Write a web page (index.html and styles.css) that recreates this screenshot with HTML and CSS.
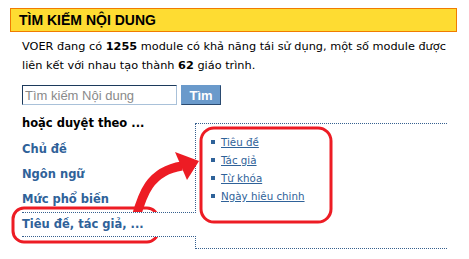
FILE: index.html
```html
<!DOCTYPE html>
<html lang="vi">
<head>
    <meta charset="UTF-8">
    <title>Tìm kiếm nội dung</title>
    <link rel="stylesheet" href="styles.css">
</head>
<body>
    <div class="page">
        <div class="box-title">TÌM KIẾM NỘI DUNG</div>

        <p class="intro">
            VOER đang có <b>1255</b> module có khả năng tái sử dụng, một số module được<br>
            liên kết với nhau tạo thành <b>62</b> giáo trình.
        </p>

        <form class="search-form" onsubmit="return false">
            <input type="text" class="search-input" placeholder="Tìm kiếm Nội dung">
            <button type="submit" class="search-button">Tìm</button>
        </form>

        <div class="browse">
            <div class="browse-menu">
                <div class="browse-heading">hoặc duyệt theo ...</div>
                <a class="browse-tab" href="#">Chủ đề</a>
                <a class="browse-tab" href="#">Ngôn ngữ</a>
                <a class="browse-tab" href="#">Mức phổ biến</a>
                <a class="browse-tab active" href="#">Tiêu đề, tác giả, ...</a>
            </div>
            <div class="browse-panel">
                <ul class="browse-list">
                    <li><a href="#">Tiêu đề</a></li>
                    <li><a href="#">Tác giả</a></li>
                    <li><a href="#">Từ khóa</a></li>
                    <li><a href="#">Ngày hiêu chinh</a></li>
                </ul>
            </div>
        </div>

        <!-- red hand-drawn annotation -->
        <svg class="markup" width="469" height="259" viewBox="0 0 469 259">
            <rect x="201" y="128" width="130" height="94" rx="13" fill="none" stroke="#ed1c24" stroke-width="3"/>
            <rect x="13" y="208" width="145" height="34" rx="11" fill="none" stroke="#ed1c24" stroke-width="3"/>
            <path d="M136 217 C 142 196, 149 171, 182 166" fill="none" stroke="#ed1c24" stroke-width="9"/>
            <polygon points="175,152 199,161 187,180" fill="#ed1c24"/>
        </svg>
    </div>
</body>
</html>
```

FILE: styles.css
```css
:root {
    --link: #2f6299;
    --dots: #36608f;
    --red: #ed1c24;
}

* {
    margin: 0;
    padding: 0;
    box-sizing: border-box;
}

body {
    font-family: 'DejaVu Sans', Verdana, sans-serif;
    font-size: 11px;
    color: #000;
    background: #fff;
}

.page {
    position: relative;
    width: 469px;
    height: 259px;
    padding: 8px 0 0 10px;
}

.box-title {
    width: 447px;
    height: 24px;
    padding-left: 8px;
    background: #fedc32;
    border: 1px solid #f07c00;
    font-family: 'Liberation Sans', Arial, sans-serif;
    font-weight: bold;
    font-size: 14px;
    line-height: 22px;
}

.intro {
    margin: 5px 0 0 12px;
    font-size: 11.3px;
    line-height: 19px;
    white-space: nowrap;
}

.search-form {
    display: flex;
    gap: 4px;
    margin: 10px 0 0 12px;
}

.search-input {
    width: 155px;
    height: 20px;
    padding: 0 2px;
    border: 1px solid #a9c1d9;
    border-top-color: #1c3a5c;
    border-left-color: #1c3a5c;
    font-family: 'Liberation Sans', Arial, sans-serif;
    font-size: 13px;
    outline: none;
}

.search-input::placeholder {
    color: #8a8a8a;
}

.search-button {
    width: 40px;
    height: 20px;
    background: #6a9acb;
    border: 1px solid #6a9acb;
    border-right-color: #2a4a70;
    border-bottom-color: #2a4a70;
    color: #fff;
    font-family: 'Liberation Sans', Arial, sans-serif;
    font-size: 13px;
    font-weight: bold;
}

.browse {
    display: flex;
    margin: 8px 0 0 12px;
}

.browse-menu {
    width: 173px;
    display: flex;
    flex-direction: column;
}

.browse-heading {
    height: 24px;
    line-height: 20px;
    font-weight: bold;
    font-size: 11.5px;
}

.browse-tab {
    height: 25px;
    line-height: 23px;
    border-top: 1px dotted transparent;
    border-bottom: 1px dotted transparent;
    color: var(--link);
    font-weight: bold;
    font-size: 11.5px;
    text-decoration: none;
}

.browse-tab.active {
    position: relative;
    z-index: 1;
    margin-right: -1px;
    background: #fff;
    border-top-color: var(--dots);
    border-bottom-color: var(--dots);
}

.browse-panel {
    width: 252px;
    height: 126px;
    margin-top: 10px;
    border: 1px dotted var(--dots);
    border-right: none;
    padding: 9px 0 0 15px;
}

.browse-list {
    list-style: none;
}

.browse-list li {
    display: flex;
    align-items: center;
    gap: 6px;
    height: 18px;
}

.browse-list li::before {
    content: '';
    width: 4px;
    height: 4px;
    background: var(--link);
}

.browse-list a {
    color: var(--link);
    font-size: 10.3px;
}

.markup {
    position: absolute;
    top: 0;
    left: 0;
    pointer-events: none;
}
```
